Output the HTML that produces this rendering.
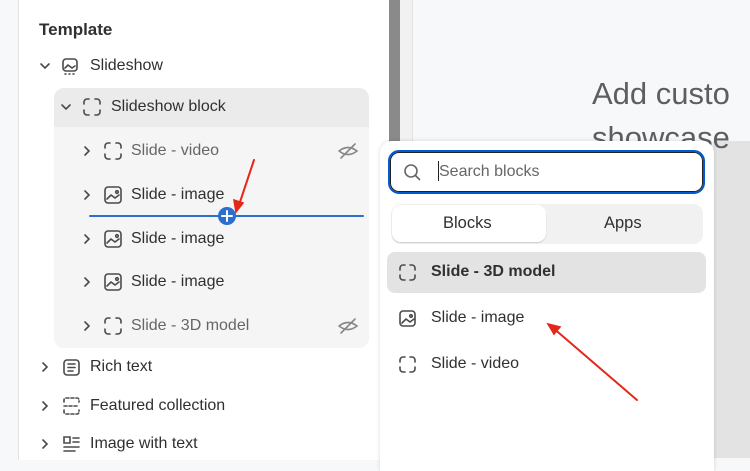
<!DOCTYPE html><html><head><style>
*{margin:0;padding:0;box-sizing:border-box}
body{width:750px;height:458px;overflow:hidden;background:#f7f8fa;font-family:"Liberation Sans",sans-serif;position:relative;color:#303030}
.a{position:absolute}
.t{font-size:16px;white-space:nowrap}
svg{position:absolute}
</style></head><body>
<div class="a" style="left:18px;top:-2px;width:371px;height:462px;background:#fff;border-left:1px solid #e3e3e3"></div>
<div class="a" style="left:389px;top:0;width:11px;height:458px;background:#8a8a8a"></div>
<div class="a" style="left:400px;top:0;width:13px;height:458px;background:#f1f1f1;border-right:1px solid #e3e3e3"></div>
<div class="a" style="left:713px;top:141px;width:37px;height:317px;background:#e3e3e3"></div>
<div class="a" style="left:592px;top:72px;font-size:31px;color:#5c5f62;line-height:44px">Add custo<br>showcase</div>
<div class="a t" style="left:39px;top:20px;font-size:17px;font-weight:bold">Template</div>
<div class="a" style="left:54px;top:88px;width:315px;height:260px;background:#f5f5f5;border-radius:10px"></div>
<div class="a" style="left:54px;top:88px;width:315px;height:39px;background:#ebebeb;border-radius:10px 10px 0 0"></div>
<svg width="390" height="458" style="left:0;top:0" fill="none" stroke="#4a4a4a" stroke-width="1.6" stroke-linecap="round">
<defs><path id="br" d="M0 5V3a3 3 0 013-3h2M11 0h2a3 3 0 013 3v2M16 11v2a3 3 0 01-3 3h-2M5 16H3a3 3 0 01-3-3v-2"/></defs>
<path d="M41 64l4 4 4-4M62 105l4 4 4-4"/>
<path d="M85 147l4 4-4 4M85 191l4 4-4 4M85 235l4 4-4 4M85 278l4 4-4 4M85 322l4 4-4 4M43 363l4 4-4 4M43 402l4 4-4 4M43 440l4 4-4 4"/>
<rect x="63" y="59" width="14" height="12" rx="3"/><path d="M65 74h1M69 74h1M73 74h1M65 68l3-3 4 3 3-2"/>
<use href="#br" x="84" y="99"/><use href="#br" x="105" y="143"/><use href="#br" x="105" y="318"/>
<g><rect x="105" y="187" width="16" height="16" rx="3"/><path d="M107 199l4-4 4 3 4-3"/><circle cx="117" cy="192" r="1.3"/></g>
<g><rect x="105" y="231" width="16" height="16" rx="3"/><path d="M107 243l4-4 4 3 4-3"/><circle cx="117" cy="236" r="1.3"/></g>
<g><rect x="105" y="274" width="16" height="16" rx="3"/><path d="M107 286l4-4 4 3 4-3"/><circle cx="117" cy="279" r="1.3"/></g>
<rect x="64" y="360" width="15" height="15" rx="3"/><path d="M68 364h7M68 367.5h7M68 371h5"/>
<path d="M64 402v-2a2 2 0 012-2h11a2 2 0 012 2v2M64 410v2a2 2 0 002 2h11a2 2 0 002-2v-2M64 406h15" stroke-dasharray="3 2"/>
<path d="M64 437h6v6h-6zM73 438h6M73 442h6M64 447h15M64 451h11"/>
<g stroke="#888"><path d="M339 151q9-7 18 0q-9 7-18 0M341 158l14-14"/><path d="M339 326q9-7 18 0q-9 7-18 0M341 333l14-14"/></g>
<path d="M90 216H363" stroke="#2c6ecb" stroke-width="2"/>
<circle cx="227" cy="216" r="9" fill="#2c6ecb" stroke="none"/><path d="M227 211v10M222 216h10" stroke="#fff" stroke-width="2"/>
<path d="M254 160L238 208" stroke="#e5271b" stroke-width="2"/><path d="M236 212l-2-12 9 3z" fill="#e5271b" stroke="#e5271b"/>
</svg>
<div class="a t" style="left:90px;top:57px">Slideshow</div>
<div class="a t" style="left:111px;top:98px">Slideshow block</div>
<div class="a t" style="left:131px;top:142px;color:#666">Slide - video</div>
<div class="a t" style="left:131px;top:186px">Slide - image</div>
<div class="a t" style="left:131px;top:230px">Slide - image</div>
<div class="a t" style="left:131px;top:273px">Slide - image</div>
<div class="a t" style="left:131px;top:317px;color:#666">Slide - 3D model</div>
<div class="a t" style="left:90px;top:358px">Rich text</div>
<div class="a t" style="left:90px;top:397px">Featured collection</div>
<div class="a t" style="left:90px;top:435px">Image with text</div>
<div class="a" style="left:380px;top:141px;width:334px;height:330px;background:#fff;border-radius:12px 12px 0 0;box-shadow:0 0 4px rgba(0,0,0,.15)"></div>
<div class="a" style="left:388px;top:150px;width:317px;height:44px;border:2px solid #005bd3;border-radius:11px"><div style="position:absolute;inset:0;border:1.5px solid #222;border-radius:9px"></div></div>
<div class="a" style="left:438px;top:161px;width:1px;height:20px;background:#222"></div>
<div class="a t" style="left:439px;top:163px;color:#666">Search blocks</div>
<div class="a" style="left:391px;top:204px;width:312px;height:40px;background:#f1f1f1;border-radius:10px"></div>
<div class="a" style="left:392px;top:205px;width:154px;height:37px;background:#fff;border-radius:9px;box-shadow:0 1px 1px rgba(0,0,0,.15)"></div>
<div class="a t" style="left:443px;top:214px;font-size:16.5px">Blocks</div>
<div class="a t" style="left:604px;top:214px;font-size:16.5px">Apps</div>
<div class="a" style="left:387px;top:252px;width:319px;height:41px;background:#e3e3e3;border-radius:8px"></div>
<div class="a t" style="left:431px;top:263px;font-weight:bold">Slide - 3D model</div>
<div class="a t" style="left:431px;top:309px">Slide - image</div>
<div class="a t" style="left:431px;top:355px">Slide - video</div>
<svg width="750" height="458" style="left:0;top:0" fill="none" stroke="#4a4a4a" stroke-width="1.6" stroke-linecap="round">
<defs><path id="br2" d="M0 5V3a3 3 0 013-3h2M10 0h2a3 3 0 013 3v2M15 10v2a3 3 0 01-3 3h-2M5 15H3a3 3 0 01-3-3v-2"/></defs>
<circle cx="411" cy="171" r="6" stroke="#666"/><path d="M415.5 175.5l4 4" stroke="#666"/>
<use href="#br2" x="400" y="265"/><use href="#br2" x="400" y="357"/>
<rect x="400" y="311" width="15" height="15" rx="3"/><path d="M402 323l4-4 4 3 4-3"/><circle cx="411" cy="316" r="1.2"/>
<path d="M637 400L552 327" stroke="#e5271b" stroke-width="2"/><path d="M548 324l12 3-6 7z" fill="#e5271b" stroke="#e5271b"/>
</svg>
</body></html>
